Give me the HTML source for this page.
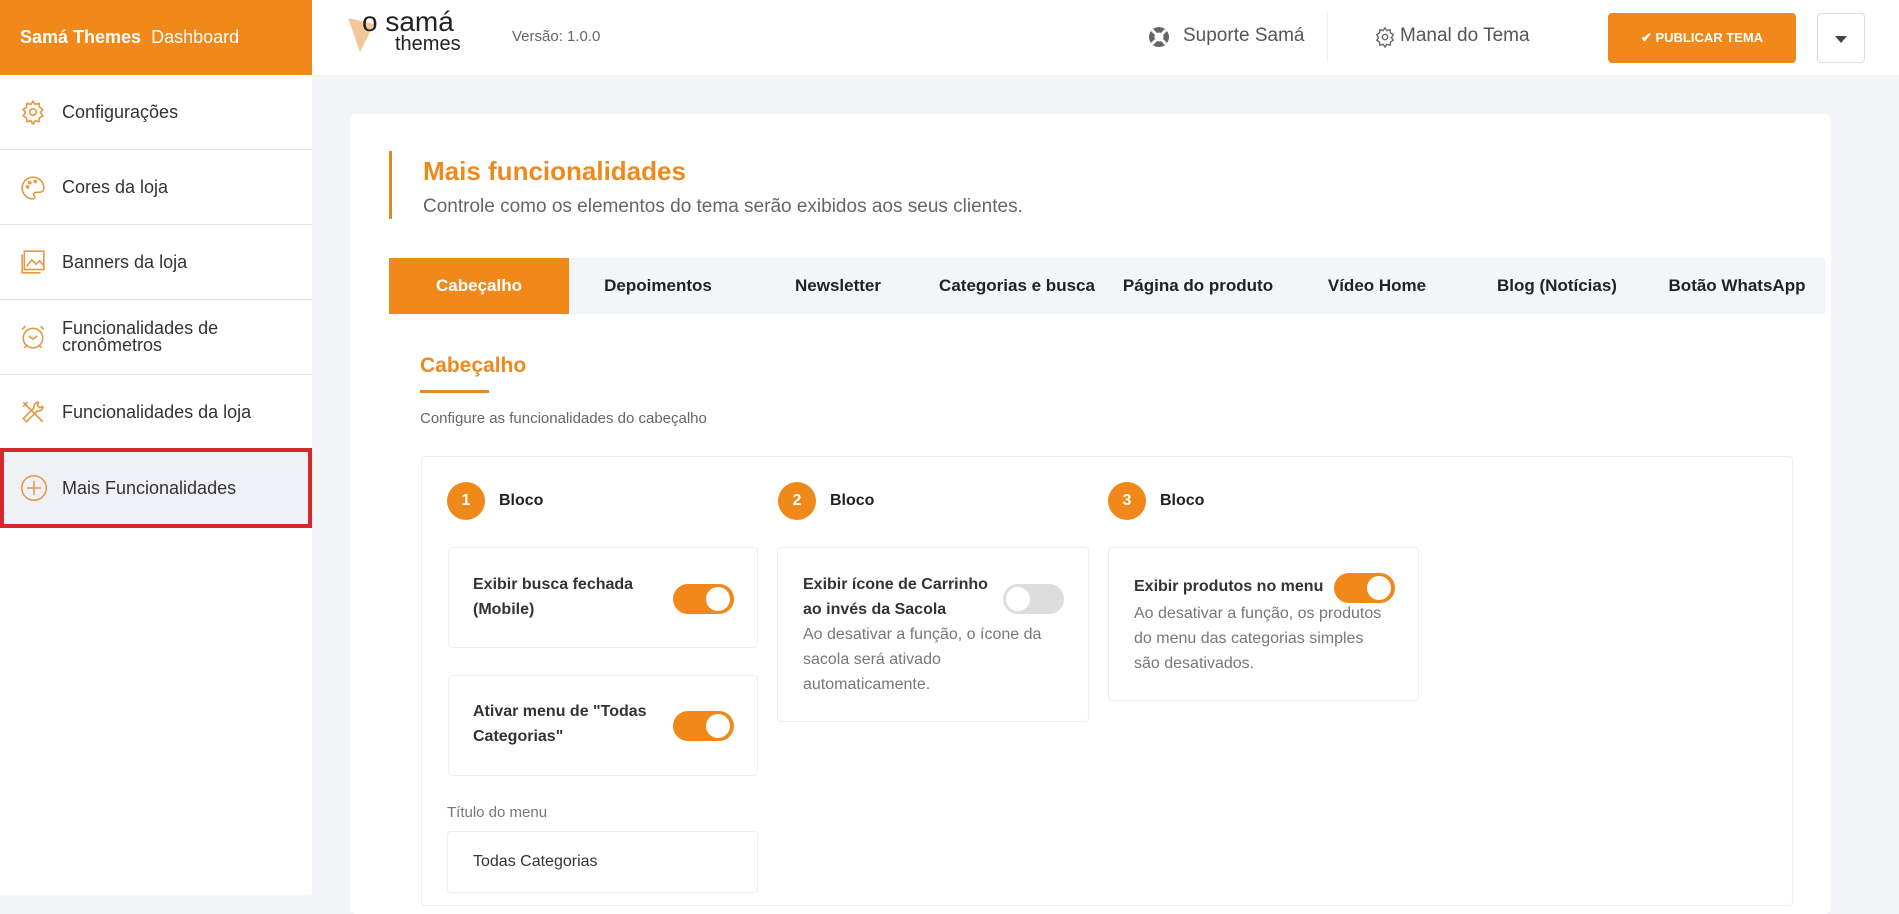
<!DOCTYPE html>
<html><head><meta charset="utf-8"><style>
*{box-sizing:border-box;margin:0;padding:0}
body{width:1899px;height:895px;overflow:hidden;background:#f3f4f8;font-family:"Liberation Sans",sans-serif;position:relative;color:#333}
.abs{position:absolute}
.or{color:#ee8a1c}
.side{left:0;top:75px;width:312px;height:820px;background:#fff}
.brand{left:0;top:0;width:312px;height:75px;background:#f0891a;color:#fff;font-size:18px;line-height:75px;padding-left:20px}
.item{position:absolute;left:0;width:312px;height:75px;border-bottom:1px solid #e6e6e6;font-size:18px;color:#333;display:flex;align-items:center;padding-left:62px;line-height:17px}
.item svg{position:absolute;left:20px;top:24px}
.top{left:312px;top:0;width:1587px;height:75px;background:#fff}
.card{left:350px;top:114px;width:1481px;height:800px;background:#fff;border-radius:6px}
.tab{position:absolute;top:258px;height:56px;width:180px;font-size:17px;font-weight:bold;line-height:56px;text-align:center;color:#222}
.blk{position:absolute;background:#fff;border:1px solid #eee;border-radius:4px}
.tt{position:absolute;font-size:16px;font-weight:bold;line-height:25px;color:#333}
.ds{position:absolute;font-size:16px;line-height:25px;color:#777}
.tg{position:absolute;width:61px;height:30px;border-radius:15px;background:#f0891a}
.tg::after{content:"";position:absolute;right:4px;top:3px;width:24px;height:24px;border-radius:50%;background:#fff}
.tg.off{background:#ddd}.tg.off::after{right:auto;left:3px}
.num{position:absolute;width:38px;height:38px;border-radius:50%;background:#f0891a;color:#fff;font-size:16px;font-weight:bold;text-align:center;line-height:38px}
.bl{position:absolute;font-size:16px;font-weight:bold;color:#222}
</style></head><body>
<div class="abs brand"><b>Samá Themes</b>&nbsp; Dashboard</div>
<div class="abs side">
 <div class="item" style="top:0"><svg width="26" height="26" viewBox="0 0 24 24" fill="none" stroke="#e39a43" stroke-width="1.5"><circle cx="12" cy="12" r="3"/><path d="M12 2l2 3 3.5-1 .5 3.5 3 2-2 3 2 3-3 2-.5 3.5-3.5-1-2 3-2-3-3.5 1-.5-3.5-3-2 2-3-2-3 3-2 .5-3.5 3.5 1z"/></svg>Configurações</div>
 <div class="item" style="top:75px"><svg width="26" height="28" viewBox="0 0 24 24" fill="none" stroke="#e39a43" stroke-width="1.5"><path d="M12 2a10 10 0 1 0 0 20c2 0 2-2 1-3s0-3 2-3h3a4 4 0 0 0 4-4C22 6 17 2 12 2z"/><circle cx="7" cy="11" r="1"/><circle cx="9" cy="7" r="1"/><circle cx="14" cy="6" r="1"/></svg>Cores da loja</div>
 <div class="item" style="top:150px"><svg width="26" height="26" viewBox="0 0 24 24" fill="none" stroke="#e39a43" stroke-width="1.5"><rect x="4" y="2" width="18" height="17"/><path d="M2 5v17h17M6 16l5-6 4 4 3-3 4 4"/></svg>Banners da loja</div>
 <div class="item" style="top:225px"><svg width="26" height="26" viewBox="0 0 24 24" fill="none" stroke="#e39a43" stroke-width="1.5"><circle cx="12" cy="13" r="9"/><path d="M8 11l4 3 4-3M2 5l3-3M22 5l-3-3M4 22l2-2M20 22l-2-2"/></svg>Funcionalidades de<br>cronômetros</div>
 <div class="item" style="top:300px"><svg width="26" height="26" viewBox="0 0 24 24" fill="none" stroke="#e39a43" stroke-width="1.5"><path d="M3 3l18 18M3 7l4-4M17 3a4 4 0 0 0-4 5L3 18l3 3 10-10a4 4 0 0 0 5-4l-3 1-2-2z"/></svg>Funcionalidades da loja</div>
 <div class="item" style="top:373px;height:80px;background:#f0f1f6;border:4px solid #d6262e;padding-left:58px"><svg width="28" height="28" viewBox="0 0 24 24" fill="none" stroke="#e39a43" stroke-width="1.3" style="left:16px;top:22px"><circle cx="12" cy="12" r="10.5"/><path d="M12 6v12M6 12h12"/></svg>Mais Funcionalidades</div>
</div>
<div class="abs top">
 <svg class="abs" style="left:36px;top:14px" width="28" height="40" viewBox="0 0 28 40"><path d="M0 4l26 6-14 28z" fill="#f3c69a"/></svg>
 <div class="abs" style="left:50px;top:8px;font-size:28px;line-height:28px;color:#222">o samá</div>
 <div class="abs" style="left:83px;top:34px;font-size:20px;line-height:20px;color:#222">themes</div>
 <div class="abs" style="left:200px;top:28px;font-size:15px;color:#666">Versão: 1.0.0</div>
 <svg class="abs" style="left:836px;top:26px" width="22" height="22" viewBox="0 0 22 22"><circle cx="11" cy="11" r="10" fill="#666"/><circle cx="11" cy="11" r="4.5" fill="#fff"/><path d="M4 4l4 4M18 4l-4 4M4 18l4-4M18 18l-4-4" stroke="#fff" stroke-width="3"/></svg>
 <div class="abs" style="left:871px;top:25px;font-size:19px;color:#555">Suporte Samá</div>
 <div class="abs" style="left:1015px;top:12px;width:1px;height:50px;background:#eee"></div>
 <svg class="abs" style="left:1062px;top:26px" width="22" height="22" viewBox="0 0 24 24" fill="none" stroke="#666" stroke-width="1.5"><circle cx="12" cy="12" r="3"/><path d="M12 2l2 3 3.5-1 .5 3.5 3 2-2 3 2 3-3 2-.5 3.5-3.5-1-2 3-2-3-3.5 1-.5-3.5-3-2 2-3-2-3 3-2 .5-3.5 3.5 1z"/></svg>
 <div class="abs" style="left:1088px;top:25px;font-size:19px;color:#555">Manal do Tema</div>
 <div class="abs" style="left:1296px;top:13px;width:188px;height:50px;background:#f0891a;border-radius:4px;color:#fff;font-size:13px;font-weight:bold;line-height:50px;text-align:center">✔ PUBLICAR TEMA</div>
 <div class="abs" style="left:1505px;top:13px;width:48px;height:50px;border:1px solid #ddd;border-radius:4px"><div class="abs" style="left:17px;top:22px;border-left:6px solid transparent;border-right:6px solid transparent;border-top:7px solid #444"></div></div>
</div>
<div class="abs card"></div>
<div class="abs" style="left:389px;top:151px;width:3px;height:68px;background:#e08a2a"></div>
<div class="abs or" style="left:423px;top:156px;font-size:26px;font-weight:bold">Mais funcionalidades</div>
<div class="abs" style="left:423px;top:196px;font-size:19px;color:#666">Controle como os elementos do tema serão exibidos aos seus clientes.</div>
<div class="abs" style="left:389px;top:258px;width:1437px;height:56px;background:#f4f5f9;border-radius:3px"></div>
<div class="tab" style="left:389px;background:#f0891a;color:#fff">Cabeçalho</div>
<div class="tab" style="left:568px">Depoimentos</div>
<div class="tab" style="left:748px">Newsletter</div>
<div class="tab" style="left:927px">Categorias e busca</div>
<div class="tab" style="left:1108px">Página do produto</div>
<div class="tab" style="left:1287px">Vídeo Home</div>
<div class="tab" style="left:1467px">Blog (Notícias)</div>
<div class="tab" style="left:1647px">Botão WhatsApp</div>
<div class="abs or" style="left:420px;top:354px;font-size:21px;font-weight:bold">Cabeçalho</div>
<div class="abs" style="left:420px;top:390px;width:69px;height:3px;background:#e08a2a"></div>
<div class="abs" style="left:420px;top:410px;font-size:15px;color:#666">Configure as funcionalidades do cabeçalho</div>
<div class="abs" style="left:421px;top:456px;width:1372px;height:450px;border:1px solid #eee;border-radius:4px"></div>
<div class="num" style="left:447px;top:482px">1</div><div class="bl" style="left:499px;top:492px">Bloco</div>
<div class="num" style="left:778px;top:482px">2</div><div class="bl" style="left:830px;top:492px">Bloco</div>
<div class="num" style="left:1108px;top:482px">3</div><div class="bl" style="left:1160px;top:492px">Bloco</div>
<div class="blk" style="left:448px;top:547px;width:310px;height:101px"></div>
<div class="tt" style="left:473px;top:572px">Exibir busca fechada<br>(Mobile)</div>
<div class="tg" style="left:673px;top:584px"></div>
<div class="blk" style="left:448px;top:675px;width:310px;height:101px"></div>
<div class="tt" style="left:473px;top:699px">Ativar menu de "Todas<br>Categorias"</div>
<div class="tg" style="left:673px;top:711px"></div>
<div class="blk" style="left:777px;top:547px;width:312px;height:175px"></div>
<div class="tt" style="left:803px;top:572px">Exibir ícone de Carrinho<br>ao invés da Sacola</div>
<div class="tg off" style="left:1003px;top:584px"></div>
<div class="ds" style="left:803px;top:622px">Ao desativar a função, o ícone da<br>sacola será ativado<br>automaticamente.</div>
<div class="blk" style="left:1108px;top:547px;width:311px;height:154px"></div>
<div class="tt" style="left:1134px;top:574px">Exibir produtos no menu</div>
<div class="tg" style="left:1334px;top:573px"></div>
<div class="ds" style="left:1134px;top:601px">Ao desativar a função, os produtos<br>do menu das categorias simples<br>são desativados.</div>
<div class="abs" style="left:447px;top:804px;font-size:15px;color:#777">Título do menu</div>
<div class="blk" style="left:447px;top:831px;width:311px;height:62px"></div>
<div class="abs" style="left:473px;top:853px;font-size:16px;color:#333">Todas Categorias</div>
</body></html>
